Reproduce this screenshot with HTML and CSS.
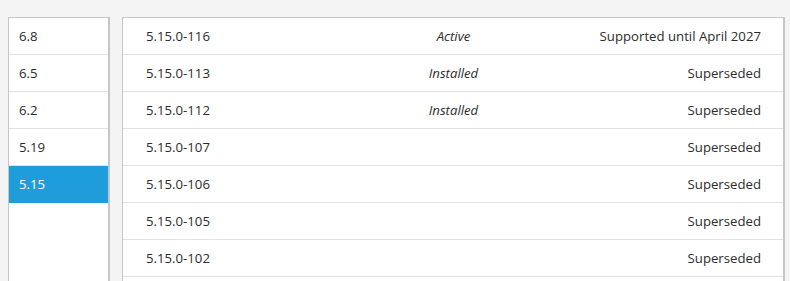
FILE: index.html
```html
<!DOCTYPE html>
<html lang="en">
<head>
<title>Kernels</title>
<meta charset="utf-8">
<meta name="viewport" content="width=device-width, initial-scale=1">
<link rel="stylesheet" href="styles.css">
</head>
<body>

<div class="layout">
  <ul class="series">
    <li>6.8</li>
    <li>6.5</li>
    <li>6.2</li>
    <li>5.19</li>
    <li class="selected">5.15</li>
  </ul>

  <div class="kernels">
    <div class="row">
      <span class="version">5.15.0-116</span>
      <span class="state">Active</span>
      <span class="support">Supported until April 2027</span>
    </div>
    <div class="row">
      <span class="version">5.15.0-113</span>
      <span class="state">Installed</span>
      <span class="support">Superseded</span>
    </div>
    <div class="row">
      <span class="version">5.15.0-112</span>
      <span class="state">Installed</span>
      <span class="support">Superseded</span>
    </div>
    <div class="row">
      <span class="version">5.15.0-107</span>
      <span class="state"></span>
      <span class="support">Superseded</span>
    </div>
    <div class="row">
      <span class="version">5.15.0-106</span>
      <span class="state"></span>
      <span class="support">Superseded</span>
    </div>
    <div class="row">
      <span class="version">5.15.0-105</span>
      <span class="state"></span>
      <span class="support">Superseded</span>
    </div>
    <div class="row">
      <span class="version">5.15.0-102</span>
      <span class="state"></span>
      <span class="support">Superseded</span>
    </div>
  </div>
</div>

</body>
</html>
```

FILE: styles.css
```css
* {
  box-sizing: border-box;
}

html, body {
  height: 100%;
  overflow: hidden;
}

body {
  margin: 0;
  background-color: #f4f4f4;
  font-family: "Open Sans", "DejaVu Sans", sans-serif;
  font-size: 13.2px;
  color: #2c2c2c;
}

.layout {
  display: flex;
  gap: 12px;
  padding: 17px 0 0 8px;
}

/* Left list of kernel series */
.series {
  list-style-type: none;
  margin: 0;
  padding: 0;
  width: 102px;
  height: 300px;
  background-color: white;
  border: 1px solid #c6c6c6;
  border-right-width: 2px;
}

.series li {
  height: 37px;
  line-height: 36px;
  padding-left: 10px;
  border-bottom: 1px solid #e2e2e2;
}

.series li.selected {
  background-color: #1f9ddb;
  color: white;
  border-bottom-color: #1f9ddb;
}

/* Right table of kernels */
.kernels {
  width: 663px;
  height: 300px;
  background-color: white;
  border: 1px solid #c6c6c6;
  border-right-width: 2px;
}

.row {
  display: grid;
  grid-template-columns: 1fr auto 1fr;
  height: 37px;
  line-height: 36px;
  padding: 0 22px 0 23px;
  border-bottom: 1px solid #e2e2e2;
}

.state {
  font-style: italic;
  text-align: center;
}

.support {
  text-align: right;
}
```
